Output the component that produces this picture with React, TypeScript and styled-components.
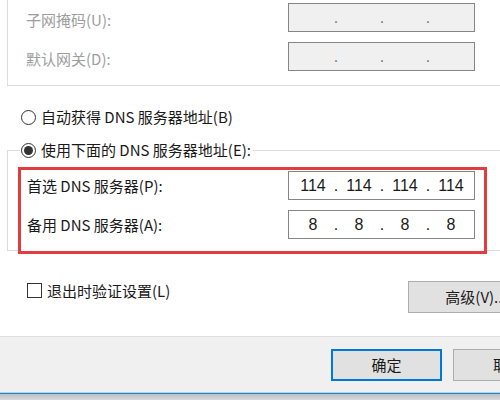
import React from "react";
import styled, { createGlobalStyle } from "styled-components";

const GlobalStyle = createGlobalStyle`
  html, body { margin: 0; padding: 0; background: #ffffff; }
  body { font-family: "Noto Sans CJK SC", "Noto Sans", sans-serif; }
  * { box-sizing: border-box; }
`;

const Root = styled.div`
  width: 500px;
  height: 400px;
  overflow: hidden;
  display: flex;
  flex-direction: column;
  background: #ffffff;
  font-size: 15px;
  color: #1a1a1a;
`;

const Main = styled.div`
  height: 336px;
  display: flex;
  flex-direction: column;
  flex: none;
`;

const GroupBox = styled.div<{ $top: number }>`
  margin-left: 7px;
  margin-top: ${(p) => p.$top}px;
  width: 520px;
  flex: none;
  border: 1px solid #dcdcdc;
  display: flex;
  flex-direction: column;
`;

const FieldGrid = styled.div<{ $pad: string; $labelCol: number }>`
  display: grid;
  grid-template-columns: ${(p) => p.$labelCol}px 187px;
  grid-auto-rows: 29px;
  row-gap: 10px;
  padding: ${(p) => p.$pad};
  align-items: center;
`;

const Label = styled.span<{ $disabled?: boolean; $shift?: number }>`
  color: ${(p) => (p.$disabled ? "#9d9d9d" : "#1a1a1a")};
  line-height: 20px;
  white-space: nowrap;
  padding-top: ${(p) => p.$shift ?? 0}px;
`;

const IpField = styled.div<{ $disabled?: boolean }>`
  height: 29px;
  border: 1px solid #858585;
  background: ${(p) => (p.$disabled ? "#f0f0f0" : "#ffffff")};
  display: flex;
  align-items: center;
  padding-left: 5px;
  font-family: "Liberation Sans", Arial, sans-serif;
  font-size: 16px;
  color: ${(p) => (p.$disabled ? "#7a7a7a" : "#1a1a1a")};
`;

const Segment = styled.span`
  width: 38px;
  text-align: center;
  line-height: 20px;
`;

const Dot = styled.span`
  width: 8px;
  text-align: center;
  line-height: 20px;
`;

const RadioRow = styled.label<{ $legend?: boolean }>`
  display: flex;
  align-items: center;
  gap: 5px;
  height: 20px;
  width: fit-content;
  background: #ffffff;
  margin-left: ${(p) => (p.$legend ? "12px" : "21px")};
  margin-top: ${(p) => (p.$legend ? "-11px" : "21px")};
  padding-left: ${(p) => (p.$legend ? "1px" : "0")};
  padding-right: ${(p) => (p.$legend ? "2px" : "0")};
  white-space: nowrap;
  line-height: 20px;
`;

const RadioCircle = styled.span<{ $checked?: boolean }>`
  width: 15px;
  height: 15px;
  border-radius: 50%;
  border: 1px solid #333333;
  background: #ffffff;
  display: flex;
  align-items: center;
  justify-content: center;
  flex: none;
  &::after {
    content: "";
    width: 9px;
    height: 9px;
    border-radius: 50%;
    background: ${(p) => (p.$checked ? "#333333" : "transparent")};
  }
`;

const Highlight = styled.div`
  position: relative;
  z-index: 1;
  margin-top: 7px;
  margin-left: 10px;
  margin-bottom: -4px;
  width: 469px;
  border: 3px solid #e23c3f;
  background: #ffffff;
`;

const OptionsRow = styled.div`
  display: flex;
  align-items: flex-start;
  margin-top: 30px;
`;

const CheckLabel = styled.label`
  display: flex;
  align-items: center;
  gap: 5px;
  margin-left: 27px;
  margin-top: 1px;
  height: 17px;
  line-height: 20px;
  white-space: nowrap;
`;

const CheckBox = styled.span`
  width: 15px;
  height: 15px;
  border: 1px solid #333333;
  background: #ffffff;
  flex: none;
`;

const Button = styled.button<{ $primary?: boolean; $width: number }>`
  width: ${(p) => p.$width}px;
  height: 32px;
  flex: none;
  background: #e1e1e1;
  border: ${(p) => (p.$primary ? "2px solid #0078d7" : "1px solid #adadad")};
  font-family: "Noto Sans CJK SC", "Noto Sans", sans-serif;
  font-size: 15px;
  color: #1a1a1a;
  padding: 0;
  text-align: center;
  line-height: 20px;
  white-space: nowrap;
`;

const AdvancedButton = styled(Button)`
  margin-left: auto;
  margin-right: -44px;
`;

const Footer = styled.div`
  flex: none;
  height: 56px;
  border-top: 1px solid #dfdfdf;
  background: #f0f0f0;
  display: flex;
  gap: 11px;
  padding-left: 331px;
  padding-top: 12px;
`;

const BottomEdge = styled.div`
  flex: 1;
  background: linear-gradient(
    to bottom,
    #a3d8f2 0px,
    #a3d8f2 1px,
    #3f7eae 1px,
    #3f7eae 2px,
    #b7c0cb 2px,
    #d9d9d9 100%
  );
`;

type IpProps = { parts: string[]; disabled?: boolean };

const IpAddress: React.FC<IpProps> = ({ parts, disabled }) => (
  <IpField $disabled={disabled}>
    {parts.map((p, i) => (
      <React.Fragment key={i}>
        <Segment>{p}</Segment>
        {i < parts.length - 1 && <Dot>.</Dot>}
      </React.Fragment>
    ))}
  </IpField>
);

export default function App() {
  return (
    <>
      <GlobalStyle />
      <Root>
        <Main>
          <GroupBox $top={-20}>
            <FieldGrid $pad="22px 0 14px 18px" $labelCol={262}>
              <Label $disabled $shift={5}>子网掩码(U):</Label>
              <IpAddress parts={["", "", "", ""]} disabled />
              <Label $disabled $shift={5}>默认网关(D):</Label>
              <IpAddress parts={["", "", "", ""]} disabled />
            </FieldGrid>
          </GroupBox>

          <RadioRow>
            <RadioCircle />
            自动获得 DNS 服务器地址(B)
          </RadioRow>

          <GroupBox $top={23}>
            <RadioRow $legend>
              <RadioCircle $checked />
              使用下面的 DNS 服务器地址(E):
            </RadioRow>
            <Highlight>
              <FieldGrid $pad="1px 0 12px 6px" $labelCol={261}>
                <Label>首选 DNS 服务器(P):</Label>
                <IpAddress parts={["114", "114", "114", "114"]} />
                <Label>备用 DNS 服务器(A):</Label>
                <IpAddress parts={["8", "8", "8", "8"]} />
              </FieldGrid>
            </Highlight>
          </GroupBox>

          <OptionsRow>
            <CheckLabel>
              <CheckBox />
              退出时验证设置(L)
            </CheckLabel>
            <AdvancedButton $width={136}>高级(V)...</AdvancedButton>
          </OptionsRow>
        </Main>
        <Footer>
          <Button $primary $width={111}>确定</Button>
          <Button $width={110}>取消</Button>
        </Footer>
        <BottomEdge />
      </Root>
    </>
  );
}
